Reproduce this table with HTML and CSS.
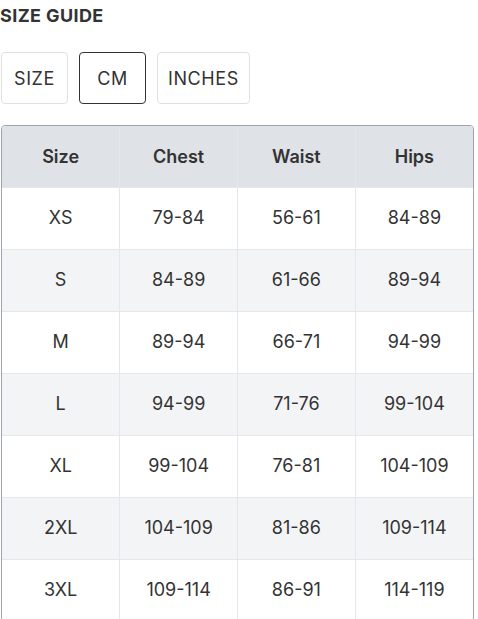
FILE: index.html
```html
<!DOCTYPE html>
<html>
<head>
<meta charset="utf-8">
<link rel="stylesheet" href="styles.css">
</head>
<body>
<div class="guide">
  <h2 class="title">SIZE GUIDE</h2>
  <div class="tabs">
    <button class="tab">SIZE</button>
    <button class="tab active">CM</button>
    <button class="tab">INCHES</button>
  </div>
  <div class="table-wrap">
    <table class="chart">
      <thead>
        <tr><th>Size</th><th>Chest</th><th>Waist</th><th>Hips</th></tr>
      </thead>
      <tbody>
        <tr><td>XS</td><td>79-84</td><td>56-61</td><td>84-89</td></tr>
        <tr><td>S</td><td>84-89</td><td>61-66</td><td>89-94</td></tr>
        <tr><td>M</td><td>89-94</td><td>66-71</td><td>94-99</td></tr>
        <tr><td>L</td><td>94-99</td><td>71-76</td><td>99-104</td></tr>
        <tr><td>XL</td><td>99-104</td><td>76-81</td><td>104-109</td></tr>
        <tr><td>2XL</td><td>104-109</td><td>81-86</td><td>109-114</td></tr>
        <tr><td>3XL</td><td>109-114</td><td>86-91</td><td>114-119</td></tr>
      </tbody>
    </table>
  </div>
</div>
</body>
</html>
```
FILE: styles.css
```css
html, body {
  margin: 0;
  padding: 0;
  background: #fff;
}
body {
  font-family: Inter, "Liberation Sans", sans-serif;
  color: #333;
}
.guide {
  padding: 0 0 0 1px;
  width: 473px;
}
.title {
  margin: 0 0 0 -1px;
  padding-top: 5px;
  font-size: 18px;
  line-height: 22px;
  font-weight: 700;
  letter-spacing: 0.4px;
  color: #333;
}
.tabs {
  display: flex;
  gap: 11px;
  margin-top: 25px;
}
.tab {
  font-family: inherit;
  font-size: 18px;
  letter-spacing: 0.6px;
  color: #333;
  background: #fff;
  border: 1px solid #e0e0e0;
  border-radius: 4px;
  height: 52px;
  min-width: 67px;
  padding: 0 10px;
  cursor: pointer;
}
.tab.active {
  border-color: #333;
}
.table-wrap {
  margin-top: 21px;
  border: 1px solid #9ca3af;
  border-radius: 4px;
  overflow: hidden;
  width: 471px;
}
.chart {
  width: 100%;
  border-collapse: collapse;
  table-layout: fixed;
}
.chart th, .chart td {
  height: 61px;
  box-sizing: border-box;
  padding: 0 0 1px;
  text-align: center;
  border-left: 1px solid #e5e7eb;
  border-top: 1px solid #e5e7eb;
  font-size: 18px;
  color: #333;
}
.chart td { height: 62px; }
.chart th:first-child, .chart td:first-child { border-left: none; }
.chart thead th {
  border-top: none;
  padding: 1px 0 0;
  background: #dfe2e6;
  font-weight: 600;
}
.chart tbody tr:nth-child(even) td {
  background: #f3f4f6;
}
```
